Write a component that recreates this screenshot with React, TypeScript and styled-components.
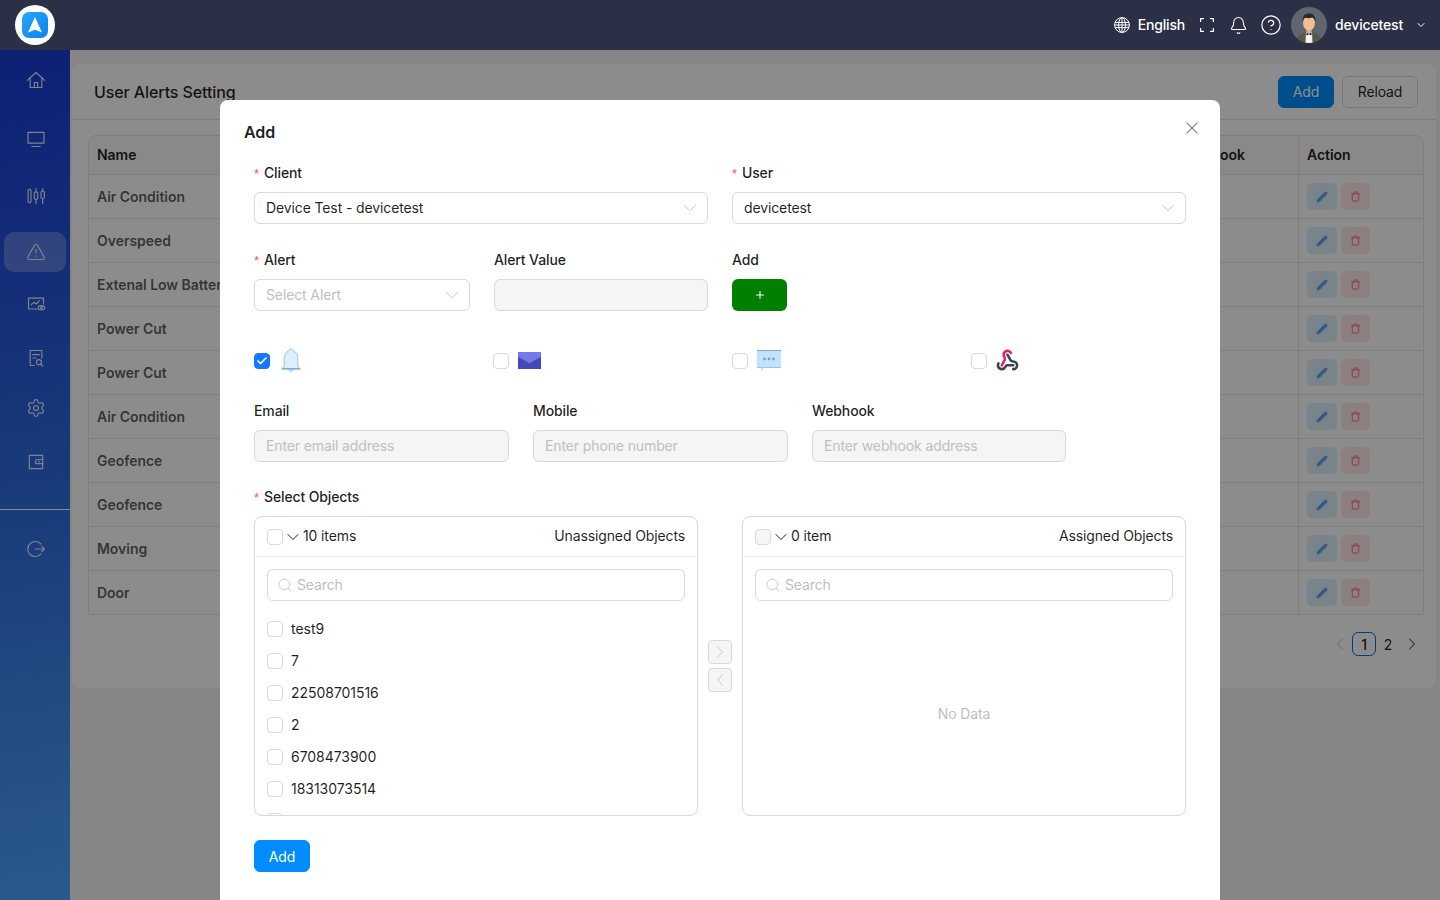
import React from 'react';
import styled, { createGlobalStyle } from 'styled-components';
import { Settings, TriangleAlert, Bell, CircleHelp, ChevronDown, ChevronLeft, ChevronRight, Search, X, Pencil, Trash, Check, Plus } from 'lucide-react';

const Global = createGlobalStyle`
  html, body { margin: 0; padding: 0; height: 100%; overflow: hidden; }
  body { font-family: Inter, "Liberation Sans", sans-serif; font-size: 14px; letter-spacing: -0.12px; color: rgba(0,0,0,.88); }
  * { box-sizing: border-box; }
`;

const Page = styled.div`
  position: relative;
  width: 1440px;
  height: 900px;
  overflow: hidden;
  display: flex;
  flex-direction: column;
  background: #f4f4f4;
`;
const TopBar = styled.header`
  position: relative;
  z-index: 3;
  flex: 0 0 50px;
  display: flex;
  align-items: center;
  justify-content: space-between;
  padding: 0 13px 0 15px;
  background: #2b3046;
  color: #fff;
`;
const Logo = styled.div`
  width: 40px;
  height: 40px;
  border-radius: 50%;
  background: #fff;
  display: flex;
  align-items: center;
  justify-content: center;
`;
const TopActions = styled.div`
  display: flex;
  align-items: center;
`;
const TopText = styled.span<{ $ml: number }>`
  margin: 0 0 2px ${p => p.$ml}px;
  font-weight: 500;
  font-size: 14px;
  letter-spacing: -0.17px;
`;
const TopIcon = styled.span<{ $ml: number }>`
  margin-left: ${p => p.$ml}px;
  display: flex;
`;
const Body = styled.div`
  flex: 1;
  display: flex;
  min-height: 0;
`;
const Sidebar = styled.nav`
  flex: 0 0 70px;
  padding-top: 10px;
  background: linear-gradient(170deg, #1a3bd6 0%, #2f6fe0 55%, #4ea4ff 100%);
`;
const NavItem = styled.div<{ $mt?: number; $active?: boolean }>`
  height: 40px;
  margin: ${p => p.$mt ?? 0}px 4px 0;
  border-radius: 10px;
  display: flex;
  align-items: center;
  justify-content: center;
  padding-left: 2px;
  color: rgba(255,255,255,.9);
  background: ${p => (p.$active ? 'rgba(255,255,255,.25)' : 'transparent')};
`;
const NavDivider = styled.div`
  height: 1px;
  margin: 27px 0 19px;
  background: #fff;
`;
const Main = styled.main`
  flex: 1;
  padding: 14px 4px 0 2px;
`;
const Card = styled.section`
  background: #fff;
  border-radius: 8px;
  height: 624px;
`;
const CardHeader = styled.div`
  height: 56px;
  display: flex;
  align-items: center;
  justify-content: space-between;
  padding: 0 18px 0 22px;
  border-bottom: 1px solid #e5e5e5;
`;
const CardTitle = styled.h1`
  margin: 0;
  font-size: 16px;
  font-weight: 500;
  letter-spacing: -0.1px;
`;
const HeaderButtons = styled.div`
  display: flex;
  gap: 8px;
`;
const Btn = styled.button<{ $primary?: boolean; $w: number }>`
  width: ${p => p.$w}px;
  height: 32px;
  border-radius: 6px;
  font: 400 14px Inter, sans-serif;
  letter-spacing: -0.15px;
  border: 1px solid ${p => (p.$primary ? '#008cff' : '#d9d9d9')};
  background: ${p => (p.$primary ? '#008cff' : '#fff')};
  color: ${p => (p.$primary ? '#fff' : 'rgba(0,0,0,.88)')};
  padding: 0;
`;
const Table = styled.div`
  margin: 15px 12px 0 16px;
  border: 1px solid #e5e5e5;
  border-radius: 8px 8px 0 0;
`;
const Row = styled.div<{ $head?: boolean }>`
  display: grid;
  grid-template-columns: 1083px 126px 1fr;
  height: ${p => (p.$head ? 39 : 44)}px;
  background: ${p => (p.$head ? '#fafafa' : '#fff')};
  border-radius: ${p => (p.$head ? '8px 8px 0 0' : '0')};
  border-bottom: 1px solid #e5e5e5;
  &:last-child { border-bottom: none; height: 43px; }
`;
const Cell = styled.div<{ $head?: boolean; $bordered?: boolean }>`
  display: flex;
  align-items: center;
  gap: 4px;
  padding: 0 8px ${p => (p.$head ? 2 : 0)}px;
  font-weight: 600;
  letter-spacing: -0.04px;
  white-space: nowrap;
  color: ${p => (p.$head ? 'rgba(0,0,0,.88)' : 'rgba(0,0,0,.65)')};
  border-left: ${p => (p.$bordered ? '1px solid #e5e5e5' : 'none')};
`;
const ActionBtn = styled.span<{ $danger?: boolean }>`
  width: ${p => (p.$danger ? 29 : 30)}px;
  height: 27px;
  border-radius: 5px;
  display: flex;
  align-items: center;
  justify-content: center;
  background: ${p => (p.$danger ? '#fde8e8' : '#dfeefb')};
  color: ${p => (p.$danger ? '#ff6a78' : '#5aa9f5')};
`;
const Pagination = styled.div`
  margin: 17px 12px 0 0;
  display: flex;
  justify-content: flex-end;
  align-items: center;
`;
const PageItem = styled.span<{ $active?: boolean; $faded?: boolean }>`
  width: 24px;
  height: 24px;
  border-radius: 6px;
  display: flex;
  align-items: center;
  justify-content: center;
  font-weight: ${p => (p.$active ? 500 : 400)};
  border: ${p => (p.$active ? '1px solid #0e6fd6' : '1px solid transparent')};
  color: ${p => (p.$faded ? 'rgba(0,0,0,.25)' : 'rgba(0,0,0,.88)')};
`;
const Mask = styled.div`
  position: absolute;
  z-index: 1;
  left: 0;
  right: 0;
  top: 50px;
  bottom: 0;
  background: rgba(0,0,0,.45);
`;
const Modal = styled.div`
  position: absolute;
  z-index: 2;
  left: 220px;
  top: 100px;
  width: 1000px;
  height: 830px;
  background: #fff;
  border-radius: 8px;
  padding: 20px 24px;
`;
const Close = styled.span`
  position: absolute;
  top: 18px;
  right: 18px;
  color: rgba(0,0,0,.45);
  display: flex;
`;
const ModalTitle = styled.h2`
  margin: 0;
  font-size: 16px;
  line-height: 24px;
  font-weight: 600;
`;
const Form = styled.form`
  margin: 18px 10px 0;
`;
const TwoCols = styled.div`
  display: grid;
  grid-template-columns: 454px 454px;
  column-gap: 24px;
`;
const AlertCols = styled.div`
  margin-top: 25px;
  display: grid;
  grid-template-columns: 216px 214px 55px;
  column-gap: 24px;
`;
const ChannelRow = styled.div`
  margin-top: 37px;
  display: grid;
  grid-template-columns: repeat(4, 239px);
  height: 24px;
`;
const Channel = styled.div<{ $gap: number }>`
  display: flex;
  align-items: center;
  gap: ${p => p.$gap}px;
`;
const ContactCols = styled.div`
  margin-top: 28px;
  display: grid;
  grid-template-columns: 255px 255px 254px;
  column-gap: 24px;
`;
const Label = styled.label`
  display: block;
  height: 22px;
  line-height: 22px;
  margin-bottom: 8px;
  font-weight: 500;
`;
const Star = styled.span`
  color: #ff4d4f;
  font-size: 13px;
  margin-right: 5px;
  font-family: "Liberation Sans", sans-serif;
`;
const Control = styled.div<{ $disabled?: boolean }>`
  height: 32px;
  display: flex;
  align-items: center;
  justify-content: space-between;
  padding: 0 11px;
  border: 1px solid #d9d9d9;
  border-radius: 6px;
  background: ${p => (p.$disabled ? '#f5f5f5' : '#fff')};
`;
const Txt = styled.span`
  margin-bottom: 2px;
`;
const Placeholder = styled(Txt)`
  color: #bfbfbf;
`;
const Arrow = styled(ChevronDown).attrs({ size: 22, strokeWidth: 1 })`
  flex: none;
  margin-right: -5px;
  color: #bfbfbf;
`;
const GreenBtn = styled.button`
  width: 55px;
  height: 32px;
  border: none;
  border-radius: 6px;
  background: #008000;
  color: #fff;
  display: flex;
  align-items: center;
  justify-content: center;
  padding: 0;
`;
const Box = styled.span<{ $checked?: boolean; $disabled?: boolean }>`
  flex: 0 0 16px;
  width: 16px;
  height: 16px;
  border-radius: 4px;
  display: flex;
  align-items: center;
  justify-content: center;
  color: #fff;
  border: 1px solid ${p => (p.$checked ? '#1677ff' : '#d9d9d9')};
  background: ${p => (p.$checked ? '#1677ff' : p.$disabled ? '#f5f5f5' : '#fff')};
`;
const ObjectsLabel = styled(Label)`
  margin-top: 24px;
`;
const Transfer = styled.div`
  display: grid;
  grid-template-columns: 444px 44px 444px;
`;
const TransferPanel = styled.div`
  height: 300px;
  border: 1px solid #d9d9d9;
  border-radius: 8px;
  overflow: hidden;
  display: flex;
  flex-direction: column;
`;
const PanelHead = styled.div`
  flex: 0 0 40px;
  display: flex;
  align-items: center;
  padding: 0 12px;
  border-bottom: 1px solid #f0f0f0;
`;
const Count = styled(Txt)`
  flex: 1;
`;
const PanelSearch = styled(Control)`
  margin: 12px 12px 0;
  flex: 0 0 32px;
  justify-content: flex-start;
  gap: 4px;
`;
const SearchGlyph = styled(Search).attrs({ size: 16, strokeWidth: 1.2 })`
  margin-left: -2px;
  color: #bfbfbf;
`;
const List = styled.div`
  margin-top: 12px;
  flex: 1;
  overflow: hidden;
`;
const ListItem = styled.div`
  height: 32px;
  display: flex;
  align-items: center;
  gap: 8px;
  padding: 0 12px;
  letter-spacing: -0.04px;
`;
const NoData = styled.div`
  flex: 1;
  display: flex;
  align-items: center;
  justify-content: center;
  padding: 10px 0 0;
  color: #bfbfbf;
`;
const Mover = styled.div`
  display: flex;
  flex-direction: column;
  align-items: center;
  justify-content: center;
  gap: 4px;
`;
const MoverBtn = styled.span`
  width: 24px;
  height: 24px;
  border: 1px solid #d9d9d9;
  border-radius: 4px;
  background: #f5f5f5;
  color: #bfbfbf;
  display: flex;
  align-items: center;
  justify-content: center;
`;
const SubmitWrap = styled.div`
  margin-top: 24px;
`;

const rows = ['Air Condition', 'Overspeed', 'Extenal Low Battery', 'Power Cut', 'Power Cut', 'Air Condition', 'Geofence', 'Geofence', 'Moving', 'Door'];
const items = ['test9', '7', '22508701516', '2', '6708473900', '18313073514', ''];

const icon = { width: 20, height: 20, viewBox: '0 0 24 24', fill: 'none', stroke: 'currentColor', strokeWidth: 1.4, strokeLinecap: 'round' as const, strokeLinejoin: 'round' as const };

const HomeIcon = () => (
  <svg {...icon}>
    <path d="M1.500 12.500L12 3l10.500 9.500" />
    <path d="M5 10v11h14V10" />
    <path d="M10 21v-6h4v6" />
  </svg>
);
const ScreenIcon = () => (
  <svg {...icon}>
    <rect x="2.500" y="4" width="19" height="13" />
    <path d="M7 21h10" />
  </svg>
);
const Candles = () => (
  <svg {...icon}>
    <rect x="2.500" y="4" width="3.500" height="16" rx="1.700" />
    <path d="M12 3v4M12 16v5" />
    <rect x="10" y="7" width="4" height="9" rx="1.500" />
    <path d="M20 3v3M20 15v6" />
    <rect x="18" y="6" width="4" height="9" rx="1.500" />
  </svg>
);
const MonitorEye = () => (
  <svg {...icon}>
    <path d="M13 18H3V5h18v7" />
    <path d="M6 13l3.500-3 3 2 3.500-4" />
    <ellipse cx="18.500" cy="16.500" rx="4" ry="2.600" />
    <circle cx="18.500" cy="16.500" r="1" />
  </svg>
);
const FileFind = () => (
  <svg {...icon}>
    <path d="M10 21H5V3h14v9" />
    <path d="M8 8h8M8 12h4" />
    <circle cx="15.500" cy="17" r="3" />
    <path d="M18 19.500l2 2" />
  </svg>
);
const WalletBox = () => (
  <svg {...icon}>
    <path d="M4 4h16v16H4z" />
    <path d="M20 9h-7a1.500 1.500 0 0 0-1.500 1.500v2A1.500 1.500 0 0 0 13 14h7" />
    <path d="M15 11.500h1" />
  </svg>
);
const Leave = () => (
  <svg {...icon}>
    <path d="M18 6.200A9 9 0 1 0 18 17.800" />
    <path d="M11 12h11M19 9l3 3-3 3" />
  </svg>
);
const Globe = () => (
  <svg width="16" height="16" viewBox="0 0 16 16" fill="none" stroke="#fff" strokeWidth="1">
    <circle cx="8" cy="8" r="7.400" />
    <ellipse cx="8" cy="8" rx="3.400" ry="7.400" />
    <path d="M8 .6v14.800M1 5.400h14M.6 8h14.800M1 10.600h14" />
  </svg>
);
const FullScreen = () => (
  <svg width="14" height="14" viewBox="0 0 14 14" fill="none" stroke="#fff" strokeWidth="1.200">
    <path d="M4 .6H.6V4M10 .6h3.400V4M4 13.400H.6V10M10 13.400h3.400V10" />
  </svg>
);
const Avatar = () => (
  <svg width="36" height="36" viewBox="0 0 36 36">
    <defs><clipPath id="av"><circle cx="18" cy="18" r="18" /></clipPath></defs>
    <g clipPath="url(#av)">
      <rect width="36" height="36" fill="#5f6670" />
      <path d="M5 36c0-7 4-9 9-10.500l4 1 4-1c5 1.500 9 3.500 9 10.500z" fill="#565a45" />
      <path d="M15 25l3 1.500 3-1.500 .5 11h-7z" fill="#f4f4f4" />
      <path d="M15.500 25.500l2.500 1.500 2.500-1.500v3l-2.500-1.200-2.500 1.200z" fill="#1d1d1d" />
      <rect x="15.500" y="20" width="5" height="6" fill="#e0ab80" />
      <ellipse cx="18" cy="16" rx="6" ry="7.500" fill="#f1bd92" />
      <path d="M11.500 15c-.5-6 2.500-8.500 6.500-8.500s7 2.500 6.500 8.500c-1-3-2-4-3.500-4.500-2 .8-5 .8-6.500.2-1.500.6-2.500 2-3 4.300z" fill="#2b2a2a" />
    </g>
  </svg>
);
const LogoMark = () => (
  <svg width="26" height="26" viewBox="0 0 26 26">
    <defs>
      <linearGradient id="lg" x1="0" y1="0" x2="1" y2="1">
        <stop offset="0" stopColor="#27a6fb" />
        <stop offset="1" stopColor="#0a84ee" />
      </linearGradient>
    </defs>
    <rect width="26" height="26" rx="7" fill="url(#lg)" />
    <path d="M13 5l7 15.500-7-2.800-7 2.800z" fill="#fff" />
  </svg>
);
const BellArt = () => (
  <svg width="20" height="25" viewBox="0 0 20 25">
    <path d="M10 1c1.300 0 2 .8 2.200 1.800C15 4 16.800 6.400 16.800 10v9l2.200 1.500H1L3.200 19v-9c0-3.600 1.800-6 4.600-7.200C8 1.800 8.700 1 10 1z" fill="#deeefd" stroke="#8bb8de" strokeWidth=".8" />
    <path d="M.5 21h19" stroke="#5f9ccf" strokeWidth="1" />
    <path d="M7.500 21.500h5c-.3 1.300-1.200 2-2.500 2s-2.200-.7-2.500-2z" fill="#b9d8f1" stroke="#8bb8de" strokeWidth=".5" />
  </svg>
);
const MailArt = () => (
  <svg width="23" height="17" viewBox="0 0 23 17">
    <rect width="23" height="17" fill="#4349b8" />
    <path d="M0 0h23v5l-11.500 6.500L0 5z" fill="#7479e3" />
    <path d="M0 17V5l11.500 6.500L23 5v12z" fill="#4349b8" />
  </svg>
);
const ChatArt = () => (
  <svg width="24" height="22" viewBox="0 0 24 22">
    <path d="M0 .5h24v17H7l-3 4v-4H0z" fill="#c2e2fd" />
    <path d="M0 .5h24" stroke="#7ea9d6" strokeWidth="1" />
    <path d="M0 17.500h24" stroke="#9dc2e4" strokeWidth="1" />
    <circle cx="7.500" cy="9" r="1.400" fill="#7c9fd0" />
    <circle cx="12" cy="9" r="1.400" fill="#7c9fd0" />
    <circle cx="16.500" cy="9" r="1.400" fill="#7c9fd0" />
  </svg>
);
const WebhookArt = () => (
  <svg width="23" height="23" viewBox="0 0 24 24" fill="none" strokeWidth="2.700" strokeLinecap="round" strokeLinejoin="round">
    <path d="M18 16.980h-5.990c-1.100 0-1.950.94-2.480 1.900A4 4 0 0 1 2 17c.01-.7.2-1.400.57-2" stroke="#37474f" />
    <path d="M12 6l3.130 5.730C15.660 12.700 16.900 13 18 13a4 4 0 0 1 0 8" stroke="#37474f" />
    <path d="M6 17l3.130-5.780c.53-.97.1-2.180-.5-3.100a4 4 0 1 1 6.890-4.060" stroke="#e91e63" />
  </svg>
);
const CheckBox = ({ checked, disabled }: { checked?: boolean; disabled?: boolean }) => (
  <Box $checked={checked} $disabled={disabled}>{checked && <Check size={12} strokeWidth={3.5} />}</Box>
);

const Panel = ({ count, title, disabled, children }: { count: string; title: string; disabled?: boolean; children: React.ReactNode }) => (
  <TransferPanel>
    <PanelHead>
      <CheckBox disabled={disabled} />
      <ChevronDown size={20} strokeWidth={1.2} />
      <Count>{count}</Count>
      <Txt>{title}</Txt>
    </PanelHead>
    <PanelSearch>
      <SearchGlyph />
      <Placeholder>Search</Placeholder>
    </PanelSearch>
    {children}
  </TransferPanel>
);

export default function App() {
  return (
    <Page>
      <Global />
      <TopBar>
        <Logo><LogoMark /></Logo>
        <TopActions>
          <TopIcon $ml={0}><Globe /></TopIcon>
          <TopText $ml={8}>English</TopText>
          <TopIcon $ml={15}><FullScreen /></TopIcon>
          <TopIcon $ml={15}><Bell size={19} strokeWidth={1.3} /></TopIcon>
          <TopIcon $ml={12}><CircleHelp size={22} strokeWidth={1.3} /></TopIcon>
          <TopIcon $ml={9}><Avatar /></TopIcon>
          <TopText $ml={8}>devicetest</TopText>
          <TopIcon $ml={12}><ChevronDown size={12} /></TopIcon>
        </TopActions>
      </TopBar>
      <Body>
        <Sidebar>
          <NavItem><HomeIcon /></NavItem>
          <NavItem $mt={19}><ScreenIcon /></NavItem>
          <NavItem $mt={17}><Candles /></NavItem>
          <NavItem $mt={16} $active><TriangleAlert size={20} strokeWidth={1.4} /></NavItem>
          <NavItem $mt={12}><MonitorEye /></NavItem>
          <NavItem $mt={14}><FileFind /></NavItem>
          <NavItem $mt={10}><Settings size={20} strokeWidth={1.4} /></NavItem>
          <NavItem $mt={14}><WalletBox /></NavItem>
          <NavDivider />
          <NavItem><Leave /></NavItem>
        </Sidebar>
        <Main>
          <Card>
            <CardHeader>
              <CardTitle>User Alerts Setting</CardTitle>
              <HeaderButtons>
                <Btn $primary $w={56}>Add</Btn>
                <Btn $w={76}>Reload</Btn>
              </HeaderButtons>
            </CardHeader>
            <Table>
              <Row $head>
                <Cell $head>Name</Cell>
                <Cell $head $bordered>Webhook</Cell>
                <Cell $head $bordered>Action</Cell>
              </Row>
              {rows.map((r, i) => (
                <Row key={i}>
                  <Cell>{r}</Cell>
                  <Cell $bordered />
                  <Cell $bordered>
                    <ActionBtn><Pencil size={12} fill="currentColor" /></ActionBtn>
                    <ActionBtn $danger><Trash size={11} strokeWidth={2} /></ActionBtn>
                  </Cell>
                </Row>
              ))}
            </Table>
            <Pagination>
              <PageItem $faded><ChevronLeft size={20} strokeWidth={1.2} /></PageItem>
              <PageItem $active>1</PageItem>
              <PageItem>2</PageItem>
              <PageItem><ChevronRight size={20} strokeWidth={1.2} /></PageItem>
            </Pagination>
          </Card>
        </Main>
      </Body>
      <Mask />
      <Modal>
        <Close><X size={20} strokeWidth={1.3} /></Close>
        <ModalTitle>Add</ModalTitle>
        <Form>
          <TwoCols>
            <div>
              <Label><Star>*</Star>Client</Label>
              <Control><Txt>Device Test - devicetest</Txt><Arrow /></Control>
            </div>
            <div>
              <Label><Star>*</Star>User</Label>
              <Control><Txt>devicetest</Txt><Arrow /></Control>
            </div>
          </TwoCols>
          <AlertCols>
            <div>
              <Label><Star>*</Star>Alert</Label>
              <Control><Placeholder>Select Alert</Placeholder><Arrow /></Control>
            </div>
            <div>
              <Label>Alert Value</Label>
              <Control $disabled />
            </div>
            <div>
              <Label>Add</Label>
              <GreenBtn type="button"><Plus size={12} strokeWidth={2} /></GreenBtn>
            </div>
          </AlertCols>
          <ChannelRow>
            <Channel $gap={11}><CheckBox checked /><BellArt /></Channel>
            <Channel $gap={9}><CheckBox /><MailArt /></Channel>
            <Channel $gap={9}><CheckBox /><ChatArt /></Channel>
            <Channel $gap={9}><CheckBox /><WebhookArt /></Channel>
          </ChannelRow>
          <ContactCols>
            <div>
              <Label>Email</Label>
              <Control $disabled><Placeholder>Enter email address</Placeholder></Control>
            </div>
            <div>
              <Label>Mobile</Label>
              <Control $disabled><Placeholder>Enter phone number</Placeholder></Control>
            </div>
            <div>
              <Label>Webhook</Label>
              <Control $disabled><Placeholder>Enter webhook address</Placeholder></Control>
            </div>
          </ContactCols>
          <ObjectsLabel><Star>*</Star>Select Objects</ObjectsLabel>
          <Transfer>
            <Panel count="10 items" title="Unassigned Objects">
              <List>
                {items.map((it, i) => (
                  <ListItem key={i}><CheckBox /><Txt>{it}</Txt></ListItem>
                ))}
              </List>
            </Panel>
            <Mover>
              <MoverBtn><ChevronRight size={20} strokeWidth={1.1} /></MoverBtn>
              <MoverBtn><ChevronLeft size={20} strokeWidth={1.1} /></MoverBtn>
            </Mover>
            <Panel count="0 item" title="Assigned Objects" disabled>
              <NoData>No Data</NoData>
            </Panel>
          </Transfer>
          <SubmitWrap>
            <Btn $primary $w={56} type="button">Add</Btn>
          </SubmitWrap>
        </Form>
      </Modal>
    </Page>
  );
}
